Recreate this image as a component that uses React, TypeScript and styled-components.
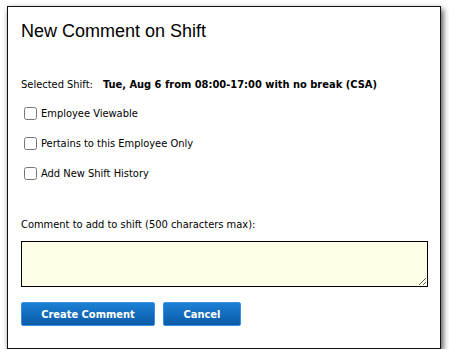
import React, { useState } from "react";
import styled, { createGlobalStyle } from "styled-components";

const GlobalStyle = createGlobalStyle`
  body {
    margin: 0;
    background: #ffffff;
    font-family: "DejaVu Sans Condensed", "DejaVu Sans", sans-serif;
  }
`;

const Page = styled.div`
  padding: 6px 0 0 7px;
`;

const Dialog = styled.div`
  box-sizing: border-box;
  width: 434px;
  height: 343px;
  background: #ffffff;
  border: 1px solid #111111;
  box-shadow: 2px 3px 6px rgba(0, 0, 0, 0.7);
  padding: 12px 13px 0 13px;
  display: flex;
  flex-direction: column;
`;

const Title = styled.h1`
  margin: 0;
  font-family: "Liberation Sans", Arial, sans-serif;
  font-weight: normal;
  font-size: 18px;
  line-height: 24px;
  color: #000000;
`;

const ShiftRow = styled.div`
  margin-top: 35px;
  display: flex;
  gap: 10px;
  font-size: 11px;
  line-height: 14px;
  color: #000000;
`;

const ShiftValue = styled.span`
  font-weight: bold;
`;

const Options = styled.div`
  margin-top: 14px;
  display: flex;
  flex-direction: column;
  gap: 15px;
`;

const OptionLabel = styled.label`
  display: flex;
  align-items: center;
  height: 15px;
  font-size: 11px;
  color: #000000;

  input {
    width: 13px;
    height: 13px;
    margin: 0 4px 0 3px;
  }
`;

const CommentLabel = styled.div`
  margin-top: 37px;
  font-size: 11px;
  line-height: 14px;
  color: #000000;
`;

const CommentBox = styled.textarea`
  box-sizing: border-box;
  margin-top: 9px;
  width: 407px;
  height: 46px;
  border: 1px solid #000000;
  background: #fffee6;
  resize: both;
  font-family: inherit;
  font-size: 11px;
  outline: none;
`;

const Buttons = styled.div`
  margin-top: 15px;
  display: flex;
  gap: 8px;
`;

const Button = styled.button<{ $width: number }>`
  box-sizing: border-box;
  width: ${(p) => p.$width}px;
  height: 24px;
  border: 1px solid #3a8ee0;
  border-radius: 2px;
  background: linear-gradient(#1c7fd4, #0a5ba6);
  color: #ffffff;
  font-family: inherit;
  font-weight: bold;
  font-size: 11px;
  padding: 0;
  cursor: pointer;
`;

function App() {
  const [comment, setComment] = useState("");

  return (
    <Page>
      <GlobalStyle />
      <Dialog>
        <Title>New Comment on Shift</Title>
        <ShiftRow>
          <span>Selected Shift:</span>
          <ShiftValue>Tue, Aug 6 from 08:00-17:00 with no break (CSA)</ShiftValue>
        </ShiftRow>
        <Options>
          <OptionLabel>
            <input type="checkbox" />
            Employee Viewable
          </OptionLabel>
          <OptionLabel>
            <input type="checkbox" />
            Pertains to this Employee Only
          </OptionLabel>
          <OptionLabel>
            <input type="checkbox" />
            Add New Shift History
          </OptionLabel>
        </Options>
        <CommentLabel>Comment to add to shift (500 characters max):</CommentLabel>
        <CommentBox value={comment} onChange={(e) => setComment(e.target.value)} />
        <Buttons>
          <Button $width={134}>Create Comment</Button>
          <Button $width={78}>Cancel</Button>
        </Buttons>
      </Dialog>
    </Page>
  );
}

export default App;
